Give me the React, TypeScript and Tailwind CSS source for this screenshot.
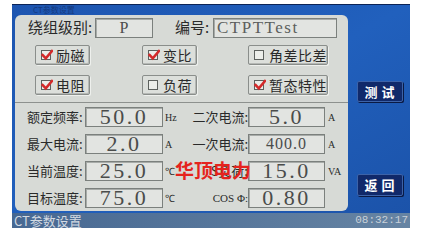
import React from "react";

const serif = "font-['Liberation_Serif','Times_New_Roman',serif]";

function Check({ on, label, w }: { on: boolean; label: string; w: string }) {
  return (
    <div
      className={`${w} h-[20px] flex items-center pl-[5px] border border-[#8a8e8b] rounded-[2px] bg-[#dcdfdb] shadow-[inset_-1px_-1px_0_#b5b8b5,1px_1px_0_#eef0ed]`}
    >
      <div className="relative w-[10px] h-[10px] border border-[#5d615e] bg-[#eceeea] flex-none">
        {on && (
          <svg viewBox="0 0 12 12" className="absolute -left-[1px] -top-[2px] w-[12px] h-[12px]">
            <path d="M1.5 6 L4.8 9.4 L11 2" fill="none" stroke="#d42a2a" strokeWidth="2.6" strokeLinecap="square" />
          </svg>
        )}
      </div>
      <span className="ml-[5px] text-[14px] leading-[20px] text-[#2a2a2a] tracking-[0.5px]">{label}</span>
    </div>
  );
}

function Box({ w, children, cls = "" }: { w: string; children: React.ReactNode; cls?: string }) {
  return (
    <div
      className={`${w} h-[20px] border border-[#7b807d] bg-[#e2e4e1] shadow-[inset_1px_1px_0_#a7aba8] ${serif} text-[#4a4c4b] flex items-center ${cls}`}
    >
      {children}
    </div>
  );
}

function ParamRow({
  l1, v1, u1, l2, v2, u2, small2 = false, serifLabel2 = false,
}: {
  l1: string; v1: string; u1: string; l2: string; v2: string; u2: string; small2?: boolean; serifLabel2?: boolean;
}) {
  return (
    <div className="flex items-center h-[20px] pl-[12px]">
      <div className="w-[58px] text-[13px] text-[#2a2a2a] whitespace-nowrap">{l1}</div>
      <Box w="w-[78px]" cls="justify-center text-[22px] tracking-[2.5px] leading-[20px]">{v1}</Box>
      <div className={`w-[29px] pl-[2px] ${serif} text-[10px] text-[#2a2a2a]`}>{u1}</div>
      <div
        className={`w-[56px] text-right whitespace-nowrap text-[#2a2a2a] ${serifLabel2 ? `${serif} text-[11px]` : "text-[13px]"}`}
      >
        {l2}
      </div>
      <Box
        w="w-[77px]"
        cls={`justify-center leading-[20px] ${small2 ? "text-[16px] tracking-[1px]" : "text-[22px] tracking-[2.5px]"}`}
      >
        {v2}
      </Box>
      <div className={`pl-[3px] ${serif} text-[10px] text-[#2a2a2a]`}>{u2}</div>
    </div>
  );
}

export default function App() {
  return (
    <div className="w-[427px] h-[251px] bg-white pl-[12px] pt-[4px] font-['Noto_Sans_CJK_SC',sans-serif]">
      <div className="w-[398px] h-[224px] flex flex-col bg-gradient-to-br from-[#1d55b0] via-[#2160bd] to-[#1b52a8] border-t border-[#0c2456]">
        {/* top caption strip */}
        <div className="h-[10px] pl-[21px] text-[8px] leading-[10px] text-[#153a80]">CT参数设置</div>

        <div className="flex h-[196px]">
          {/* main panel */}
          <div className="relative ml-[3px] w-[333px] h-[196px] bg-[#d7dad6] rounded-[6px] flex flex-col">
            {/* row 1 */}
            <div className="flex items-center h-[19px] mt-[3px] pl-[13px] text-[15px] text-[#2a2a2a]">
              <div className="w-[67px] whitespace-nowrap">绕组级别:</div>
              <Box w="w-[58px] h-[19px]" cls="justify-center text-[16px]">P</Box>
              <div className="ml-[22px] w-[38px] whitespace-nowrap">编号:</div>
              <Box w="w-[124px] h-[19px]" cls="pl-[3px] text-[17px] tracking-[1.5px] text-[#5c5f5d]">CTPTTest</Box>
            </div>

            {/* checkbox rows */}
            <div className="flex mt-[8px] pl-[20px]">
              <Check on label="励磁" w="w-[55px]" />
              <div className="ml-[52px]"><Check on label="变比" w="w-[55px]" /></div>
              <div className="ml-[51px]"><Check on={false} label="角差比差" w="w-[80px]" /></div>
            </div>
            <div className="flex mt-[10px] pl-[20px]">
              <Check on label="电阻" w="w-[55px]" />
              <div className="ml-[52px]"><Check on={false} label="负荷" w="w-[55px]" /></div>
              <div className="ml-[51px]"><Check on label="暂态特性" w="w-[80px]" /></div>
            </div>

            <div className="mt-[7px] h-px bg-[#8d918e]" />

            <div className="mt-[4px] flex flex-col gap-[7px]">
              <ParamRow l1="额定频率:" v1="50.0" u1="Hz" l2="二次电流:" v2="5.0" u2="A" />
              <ParamRow l1="最大电流:" v1="2.0" u1="A" l2="一次电流:" v2="400.0" u2="A" small2 />
              <ParamRow l1="当前温度:" v1="25.0" u1="℃" l2="S负荷:" v2="15.0" u2="VA" />
              <ParamRow l1="目标温度:" v1="75.0" u1="℃" l2="COS Φ:" v2="0.80" u2="" serifLabel2 />
            </div>

            {/* watermark */}
            <div className="absolute left-[160px] top-[144px] text-[19px] leading-[22px] font-semibold text-[#e5231d] whitespace-nowrap">
              华顶电力
            </div>
          </div>

          {/* right button column */}
          <div className="flex-1 flex flex-col items-center pl-[1px]">
            <button className="mt-[66px] w-[46px] h-[21px] rounded-[2px] bg-[#10296a] border border-[#3d63a8] shadow-[1px_1px_0_#0a1a44] text-white font-bold text-[13px] leading-[19px] tracking-[4px] pl-[4px]">
              测试
            </button>
            <button className="mt-[72px] w-[46px] h-[22px] rounded-[2px] bg-[#10296a] border border-[#3d63a8] shadow-[1px_1px_0_#0a1a44] text-white font-bold text-[13px] leading-[20px] tracking-[4px] pl-[4px]">
              返回
            </button>
          </div>
        </div>

        {/* status bar */}
        <div className="mt-[2px] h-[15px] flex items-center justify-between px-[2px] bg-gradient-to-r from-[#476892] to-[#6684a3]">
          <span className="text-[13px] leading-[15px] text-[#d3dae2]">CT参数设置</span>
          <span className="font-['Liberation_Mono',monospace] text-[11px] leading-[15px] text-[#c9d1d9]">08:32:17</span>
        </div>
      </div>
    </div>
  );
}
